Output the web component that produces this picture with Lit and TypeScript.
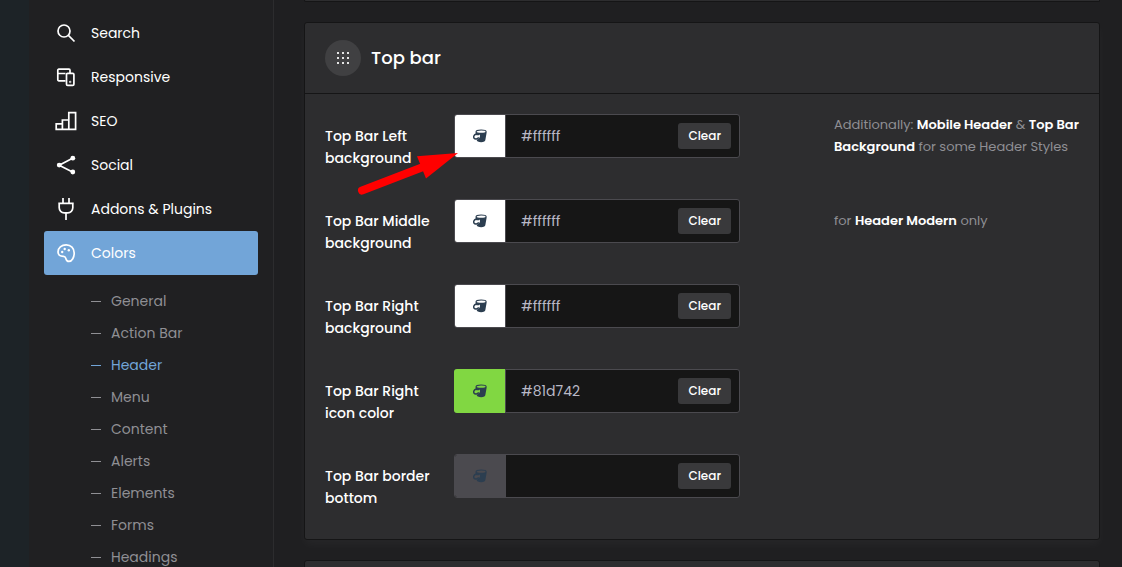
import { LitElement, html, css, svg, nothing, TemplateResult } from "lit";
import { customElement, property } from "lit/decorators.js";
import { classMap } from "lit/directives/class-map.js";

const icons: Record<string, TemplateResult> = {
  search: svg`<circle cx="9" cy="9" r="6"/><path d="M13.4 13.4 19.5 19.5"/>`,
  responsive: svg`<path d="M10.500 14.800H3.800a1 1 0 0 1-1-1V4.200a1 1 0 0 1 1-1H14a1 1 0 0 1 1 1V7M2.800 7.500H10.500"/><rect x="11.500" y="7.400" width="7.400" height="12" rx="1.200"/><circle cx="15.200" cy="16" r=".3"/>`,
  seo: svg`<path d="M1.200 19.400v-5.600h6.200v5.600zM7.400 19.400V10h6.400v9.400zM13.800 19.400V2.600h6.800v16.800z"/>`,
  social: svg`<path d="M18 4 4.200 11.200 18 18.200"/><g fill="currentColor" stroke="none"><circle cx="17.800" cy="4.200" r="2.400"/><circle cx="4.200" cy="11.100" r="2.400"/><circle cx="17.800" cy="18" r="2.400"/></g>`,
  plug: svg`<path d="M8 0v5M14 0v5M3.300 5.400h15.400M4.200 5.400v4.400a5 5 0 0 0 5 5h3.600a5 5 0 0 0 5-5V5.400M11 15v7"/>`,
  colors: svg`<path d="M11.200 2.900c-4.700 0-8.200 3-8.200 7.100 0 3 2.200 4.400 5.600 4.300 1.600 0 1.800.8 2.200 2.100.5 1.800 1.400 3 3.100 3 3.300 0 5.300-4.300 5.300-8.400 0-4.800-3.300-8.100-8-8.100z"/><g fill="currentColor" stroke="none"><circle cx="7.200" cy="10" r="1.200"/><circle cx="9.700" cy="7" r="1.200"/><circle cx="13.800" cy="8.200" r="1.200"/></g>`,
};

interface Field {
  id: string;
  label: string;
  value: string;
  note?: TemplateResult;
  arrow?: boolean;
}

const fields: Field[] = [
  {
    id: "left",
    label: "Top Bar Left background",
    value: "#ffffff",
    arrow: true,
    note: html`Additionally: <b>Mobile Header</b> &amp; <b>Top Bar Background</b> for some Header Styles`,
  },
  { id: "middle", label: "Top Bar Middle background", value: "#ffffff", note: html`for <b>Header Modern</b> only` },
  { id: "right", label: "Top Bar Right background", value: "#ffffff" },
  { id: "icon", label: "Top Bar Right icon color", value: "#81d742" },
  { id: "border", label: "Top Bar border bottom", value: "" },
];

@customElement("color-field")
export class ColorField extends LitElement {
  @property() label = "";
  @property() value = "";

  static styles = css`
    :host { display: block; }
    .control {
      display: flex;
      align-items: center;
      box-sizing: border-box;
      max-width: 286px;
      height: 44px;
      border: 1px solid #4b4a4f;
      border-radius: 3px;
      background: #161616;
      padding-right: 8px;
    }
    .swatch {
      flex: none;
      align-self: stretch;
      width: 51px;
      padding: 0;
      border: 0;
      border-right: 1px solid #4b4a4f;
      border-radius: 2px 0 0 2px;
      background: #4b4a4f;
      display: grid;
      place-items: center;
      cursor: pointer;
    }
    .tinted { box-sizing: border-box; width: 52px; margin: -1px 0 -1px -1px; border-radius: 3px 0 0 3px; }
    .bucket { width: 14px; height: 14px; color: #2c3e50; }
    .text {
      flex: 1;
      min-width: 0;
      box-sizing: border-box;
      height: 42px;
      padding: 0 15px;
      border: 0;
      outline: 0;
      background: transparent;
      color: #b9b9c6;
      font: inherit;
    }
    .clear {
      flex: none;
      height: 26px;
      padding: 0 10px;
      border: 0;
      border-radius: 3px;
      background: #39393b;
      color: #fff;
      font: inherit;
      font-size: 12px;
      font-weight: 500;
      cursor: pointer;
    }
  `;

  render() {
    const tinted = this.value !== "" && this.value !== "#ffffff";
    return html`<div class="control">
      <button
        class=${classMap({ swatch: true, tinted })}
        aria-label="Pick ${this.label}"
        style=${this.value ? `background-color:${this.value}` : nothing}
      >
        <svg class="bucket" viewBox="0 0 14 14" fill="none" stroke="currentColor">
          <path d="M2.500 3.200 2.900 6c1.500.7 3.200.3 4-.6.6 2.200-.6 4.700-3.200 5.300.2 1 .6 1.500 1.200 1.800 1.700.9 4.800.9 6.400 0 .7-.4 1-1 1.100-1.800L13.700 3.200C11 4.900 5.500 4.900 2.500 3.200z" fill="currentColor" stroke="none"/>
          <ellipse cx="8.100" cy="2.700" rx="5" ry="1.700" stroke-width="1.200"/>
          <path d="M3 5C.8 6 .2 8 1.100 9.200c1 1.300 3.300.9 4.700-.8" stroke-width="1.500"/>
        </svg>
      </button>
      <input class="text" type="text" aria-label=${this.label} .value=${this.value} />
      <button class="clear">Clear</button>
    </div>`;
  }
}

@customElement("app-root")
export class AppRoot extends LitElement {
  private nav: [string, string][] = [
    ["search", "Search"],
    ["responsive", "Responsive"],
    ["seo", "SEO"],
    ["social", "Social"],
    ["plug", "Addons & Plugins"],
    ["colors", "Colors"],
  ];
  private sub = ["General", "Action Bar", "Header", "Menu", "Content", "Alerts", "Elements", "Forms", "Headings"];

  static styles = css`
    :host {
      display: flex;
      height: 100vh;
      overflow: hidden;
      background: #1f1f21;
      color: #fff;
      font-family: Poppins, Inter, sans-serif;
      font-size: 14px;
      line-height: 22px;
    }
    .rail { flex: none; width: 29px; background: #1d2327; }
    .sidebar {
      flex: none;
      box-sizing: border-box;
      width: 245px;
      padding: 11px 15px;
      border-right: 1px solid #2c2c2e;
      background: #202022;
    }
    ul { list-style: none; margin: 0; padding: 0; }
    a { color: inherit; text-decoration: none; }
    .item {
      display: flex;
      align-items: center;
      gap: 14px;
      height: 44px;
      padding: 0 11px;
      border-radius: 3px;
    }
    .item.active { background: #72a5d8; }
    .icon { flex: none; width: 22px; height: 22px; overflow: visible; }
    .sub { padding: 10px 0 0 47px; color: #8f8f94; }
    .subitem { display: flex; align-items: center; gap: 10px; height: 32px; }
    .subitem::before { content: ""; width: 10px; height: 1px; background: currentColor; }
    .subitem.active { color: #72a5d8; }
    main { flex: 1; min-width: 0; padding: 0 22px 0 30px; }
    .card {
      box-sizing: border-box;
      margin-bottom: 20px;
      border: 1px solid #151516;
      border-radius: 3px;
      background: #2d2d2f;
      box-shadow: 0 5px 10px rgba(255, 255, 255, 0.03);
    }
    .previous { height: 2px; border-top: 0; border-radius: 0 0 3px 3px; }
    .next { height: 60px; }
    .head {
      display: flex;
      align-items: center;
      gap: 10px;
      height: 70px;
      padding: 0 20px;
      border-bottom: 1px solid #151516;
    }
    .badge {
      display: grid;
      place-items: center;
      width: 36px;
      height: 36px;
      border-radius: 50%;
      background: #404042;
    }
    h2 { margin: 0; font-size: 18px; font-weight: 500; }
    .body { padding: 20px 20px 0; }
    .row {
      position: relative;
      display: grid;
      grid-template-columns: 109fr 360fr 245fr;
      gap: 20px;
      padding-bottom: 30px;
    }
    .row > * { min-width: 0; }
    .label { padding-top: 11px; font-weight: 500; }
    .note { display: flex; align-items: center; min-height: 44px; align-self: start; }
    .note p { margin: 0; font-size: 13px; color: #8f8f94; }
    b { font-weight: 600; color: #fff; }
    .arrow { position: absolute; left: 30px; top: 36px; width: 106px; height: 48px; pointer-events: none; }
  `;

  render() {
    return html`
      <div class="rail"></div>
      <nav class="sidebar">
        <ul>
          ${this.nav.map(
            ([icon, label]) => html`<li>
              <a href="#" class=${classMap({ item: true, active: label === "Colors" })}>
                <svg class="icon" viewBox="0 0 22 22" fill="none" stroke="currentColor" stroke-width="1.700">${icons[icon]}</svg>
                ${label}
              </a>
            </li>`
          )}
        </ul>
        <ul class="sub">
          ${this.sub.map(
            (label) => html`<li><a href="#" class=${classMap({ subitem: true, active: label === "Header" })}>${label}</a></li>`
          )}
        </ul>
      </nav>
      <main>
        <div class="card previous"></div>
        <section class="card">
          <header class="head">
            <span class="badge">
              <svg width="14" height="14" fill="#e4e4e4">
                ${[1, 6, 11].map((y) => [1, 6, 11].map((x) => svg`<rect x=${x} y=${y} width="2" height="2"/>`))}
              </svg>
            </span>
            <h2>Top bar</h2>
          </header>
          <div class="body">
            ${fields.map(
              (f) => html`<div class="row">
                <div class="label" id=${f.id}>${f.label}</div>
                <color-field role="group" aria-labelledby=${f.id} .label=${f.label} .value=${f.value}></color-field>
                ${f.note ? html`<div class="note"><p>${f.note}</p></div>` : nothing}
                ${f.arrow
                  ? html`<svg class="arrow" viewBox="0 0 106 48" fill="#f00" aria-hidden="true">
                      <path d="M7 40.500 72 15.500" stroke="#f00" stroke-width="8" stroke-linecap="round"/>
                      <path d="M103 3 62 6.300 71 28.500z"/>
                    </svg>`
                  : nothing}
              </div>`
            )}
          </div>
        </section>
        <div class="card next"></div>
      </main>
    `;
  }
}
